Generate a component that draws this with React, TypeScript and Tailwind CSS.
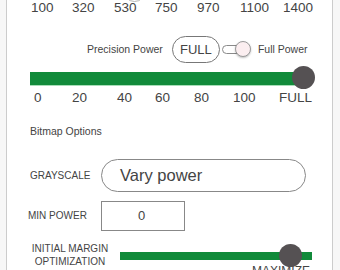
const topLabels = [
  { label: '100', w: 'w-[41px]' },
  { label: '320', w: 'w-[42px]' },
  { label: '530', w: 'w-[41px]' },
  { label: '750', w: 'w-[42px]' },
  { label: '970', w: 'w-[43px]' },
  { label: '1100', w: 'w-[43px]' },
  { label: '1400', w: 'w-[40px]' },
];

const powerLabels = [
  { label: '0', w: 'w-[38px]' },
  { label: '20', w: 'w-[45px]' },
  { label: '40', w: 'w-[38px]' },
  { label: '60', w: 'w-[39px]' },
  { label: '80', w: 'w-[39px]' },
  { label: '100', w: 'w-[46px]' },
  { label: 'FULL', w: 'w-[40px]' },
];

const Toggle = () => (
  <div className="relative w-[29px] h-[17px]">
    <div className="absolute left-0 top-[4px] w-[20px] h-[9px] rounded-full border border-[#8a8a8a] bg-white" />
    <div className="absolute right-0 top-0 w-[16px] h-[16px] rounded-full border border-[#9a9a9a] bg-[#fbeef0] shadow-[0_1px_2px_rgba(0,0,0,0.25)]" />
  </div>
);

const App = () => {
  return (
    <div className="w-[340px] h-[270px] overflow-hidden bg-[#f7f7f7] font-['Liberation_Sans',Arial,sans-serif] text-[#444]">
      <div className="relative ml-[6px] w-[327px] h-full border-x border-[#cccccc] bg-white">
        {/* top slider thumb, mostly scrolled off */}
        <div className="absolute left-[116px] top-[-21px] w-[23px] h-[23px] rounded-full border border-[#b5b5b5] bg-white" />

        <div className="flex pl-[24px] text-[13.5px] leading-[16px]">
          {topLabels.map((t) => (
            <div key={t.label} className={t.w}>{t.label}</div>
          ))}
        </div>

        <div className="flex items-center mt-[20px] pl-[80px]">
          <span className="text-[10.5px] leading-[13px]">Precision Power</span>
          <div className="ml-[9px] w-[48px] h-[27px] rounded-full border border-[#777] flex items-center justify-center text-[13px]">
            FULL
          </div>
          <div className="ml-[2px]">
            <Toggle />
          </div>
          <span className="ml-[7px] text-[10.5px] leading-[13px]">Full Power</span>
        </div>

        <div className="mt-[9px] ml-[23px] relative w-[278px]">
          <div className="h-[13px] bg-[#118a3a]" />
          <div className="h-px bg-[#a8ddb8]" />
          <div className="absolute right-[-7px] top-[-6px] w-[23px] h-[23px] rounded-full bg-[#555153]" />
        </div>

        <div className="flex mt-[4px] pl-[27px] text-[13.5px] leading-[16px]">
          {powerLabels.map((t) => (
            <div key={t.label} className={t.w}>{t.label}</div>
          ))}
        </div>

        <div className="mt-[19px] pl-[23px] text-[10.5px] leading-[13px]">Bitmap Options</div>

        <div className="flex items-center mt-[21px] pl-[23px]">
          <span className="w-[71px] text-[10px] leading-[12px]">GRAYSCALE</span>
          <div className="w-[205px] h-[33px] rounded-full border border-[#888] flex items-center pl-[18px] text-[16.5px]">
            Vary power
          </div>
        </div>

        <div className="flex items-center mt-[9px] pl-[21px]">
          <span className="w-[73px] text-[10px] leading-[12px]">MIN POWER</span>
          <div className="w-[84px] h-[30px] border border-[#888] flex items-center pl-[36px] text-[13px]">
            0
          </div>
        </div>

        <div className="flex items-start mt-[11px] pl-[23px]">
          <div className="w-[80px] text-center text-[10px] leading-[13px]">
            INITIAL MARGIN
            <br />
            OPTIMIZATION
          </div>
          <div className="ml-[10px] w-[192px] mt-[10px]">
            <div className="relative h-[8px] bg-[#118a3a]">
              <div className="absolute left-[159px] top-[-8px] w-[23px] h-[23px] rounded-full bg-[#555153]" />
            </div>
            <div className="mt-[4px] pr-[2px] text-right text-[12px] leading-[14px]">MAXIMIZE</div>
          </div>
        </div>
      </div>
    </div>
  );
};

export default App;
